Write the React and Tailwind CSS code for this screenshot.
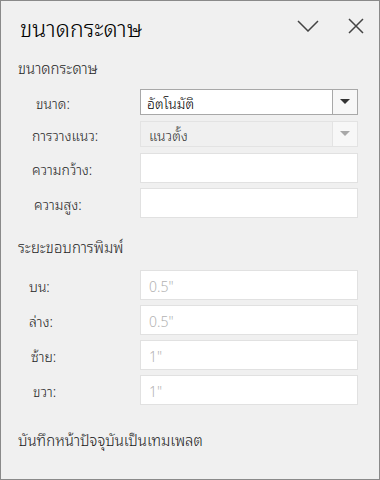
export default function App() {
  const font = { fontFamily: '"Noto Sans Thai Looped", "Noto Serif Thai", "Leelawadee", Tahoma, Garuda, Loma, "Noto Sans Thai", "Noto Sans", sans-serif' };
  const Label = ({ children, pl }) => (
    <div className={`w-[139px] shrink-0 text-[14px] text-[#262626] ${pl}`}>{children}</div>
  );
  const Box = ({ value }) => (
    <div className="h-[30px] w-[218px] bg-white border border-[#e1e1e1] flex items-center px-[8px] text-[14px] text-[#b3b3b3]">{value}</div>
  );
  return (
    <div className="w-[380px] h-[480px] bg-[#f0f0f0] border border-[#8a8a8a] flex flex-col text-[#1f1f1f] font-light" style={font}>
      <div className="h-[50px] flex items-center pl-[19px] pr-[15px]">
        <div className="text-[23px] text-black flex-1 leading-none">ขนาดกระดาษ</div>
        <svg width="22" height="12" viewBox="0 0 22 12" className="mr-[29px]">
          <path d="M1 1 L11 11 L21 1" fill="none" stroke="#444" strokeWidth="1.5" />
        </svg>
        <svg width="16" height="16" viewBox="0 0 16 16">
          <path d="M1 1 L15 15 M15 1 L1 15" fill="none" stroke="#444" strokeWidth="1.5" />
        </svg>
      </div>
      <div className="pl-[17px] text-[15px] text-[#262626] mt-[6px] h-[20px] leading-[20px]">ขนาดกระดาษ</div>
      <div className="flex flex-col mt-[12px]">
        <div className="flex items-center h-[26px]">
          <Label pl="pl-[35px]">ขนาด:</Label>
          <div className="h-[26px] w-[218px] bg-white border border-[#a8a8a8] flex items-stretch text-[14px] text-black">
            <div className="flex-1 flex items-center px-[6px]">อัตโนมัติ</div>
            <div className="w-[25px] border-l border-[#a8a8a8] bg-[#f7f7f7] flex items-center justify-center">
              <svg width="10" height="6" viewBox="0 0 10 6"><path d="M0 0 L10 0 L5 5 Z" fill="#333" /></svg>
            </div>
          </div>
        </div>
        <div className="flex items-center h-[26px] mt-[6px]">
          <Label pl="pl-[31px]">การวางแนว:</Label>
          <div className="h-[26px] w-[218px] bg-[#f0f0f0] border border-[#e3e3e3] flex items-stretch text-[14px] text-[#333]">
            <div className="flex-1 flex items-center px-[8px]">แนวตั้ง</div>
            <div className="w-[25px] border-l border-[#e3e3e3] bg-[#f7f7f7] flex items-center justify-center">
              <svg width="10" height="6" viewBox="0 0 10 6"><path d="M0 0 L10 0 L5 5 Z" fill="#a8a8a8" /></svg>
            </div>
          </div>
        </div>
        <div className="flex items-center h-[30px] mt-[6px]">
          <Label pl="pl-[31px]">ความกว้าง:</Label>
          <Box value="" />
        </div>
        <div className="flex items-center h-[30px] mt-[5px]">
          <Label pl="pl-[33px]">ความสูง:</Label>
          <Box value="" />
        </div>
      </div>
      <div className="pl-[17px] text-[15px] text-[#262626] mt-[18px] h-[20px] leading-[20px]">ระยะขอบการพิมพ์</div>
      <div className="flex flex-col mt-[14px] gap-[5px]">
        <div className="flex items-center"><Label pl="pl-[28px]">บน:</Label><Box value={'0.5"'} /></div>
        <div className="flex items-center"><Label pl="pl-[28px]">ล่าง:</Label><Box value={'0.5"'} /></div>
        <div className="flex items-center"><Label pl="pl-[30px]">ซ้าย:</Label><Box value={'1"'} /></div>
        <div className="flex items-center"><Label pl="pl-[32px]">ขวา:</Label><Box value={'1"'} /></div>
      </div>
      <div className="pl-[17px] text-[15px] text-[#1a1a1a] mt-[24px] h-[20px] leading-[20px]">บันทึกหน้าปัจจุบันเป็นเทมเพลต</div>
    </div>
  );
}
